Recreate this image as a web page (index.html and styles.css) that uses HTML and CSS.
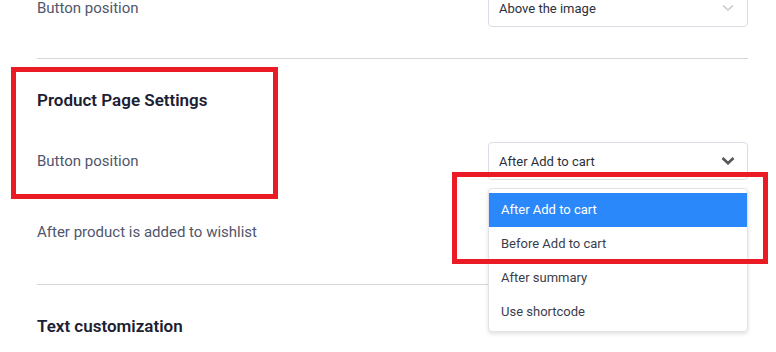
FILE: index.html
```html
<!DOCTYPE html>
<html>
<head>
<meta charset="utf-8">
<link rel="stylesheet" href="styles.css">
</head>
<body>
<div class="page">
  <div class="row row-first">
    <span class="label">Button position</span>
    <div class="select">
      <span class="select-text">Above the image</span>
      <svg class="chev chev-light" width="14" height="10" viewBox="0 0 14 10"><path d="M2 2.5 L7 7 L12 2.5" fill="none" stroke="#c9c9cf" stroke-width="1.6"/></svg>
    </div>
  </div>
  <div class="sep sep-1"></div>
  <h2 class="heading heading-1">Product Page Settings</h2>
  <div class="row row-2">
    <span class="label">Button position</span>
    <div class="select">
      <span class="select-text">After Add to cart</span>
      <svg class="chev" width="14" height="10" viewBox="0 0 14 10"><path d="M1.5 2 L7 7.2 L12.5 2" fill="none" stroke="#555" stroke-width="2.6"/></svg>
    </div>
  </div>
  <div class="row row-3">
    <span class="label">After product is added to wishlist</span>
  </div>
  <div class="sep sep-2"></div>
  <h2 class="heading heading-2">Text customization</h2>
</div>

<div class="menu">
  <div class="item active">After Add to cart</div>
  <div class="item">Before Add to cart</div>
  <div class="item">After summary</div>
  <div class="item">Use shortcode</div>
</div>

<div class="mark mark-1"></div>
<div class="mark mark-2"></div>
</body>
</html>
```
FILE: styles.css
```css
html, body {
  margin: 0;
  padding: 0;
  background: #fff;
  overflow: hidden;
}
body {
  width: 776px;
  height: 352px;
  position: relative;
  font-family: Roboto, "Liberation Sans", sans-serif;
}
.page {
  padding: 0 28px 0 37px;
}
.row {
  display: flex;
  align-items: center;
  justify-content: space-between;
  height: 38px;
}
.row-first {
  margin-top: -11px;
}
.label {
  font-size: 15px;
  color: #50566b;
}
.select {
  width: 260px;
  height: 38px;
  box-sizing: border-box;
  border: 1px solid #dcdce6;
  border-radius: 4px;
  display: flex;
  align-items: center;
  justify-content: space-between;
  padding: 0 12px 0 10px;
}
.select-text {
  font-size: 13px;
  color: #2c2f3a;
}
.chev {
  display: block;
}
.sep {
  border-top: 1px solid #d6d6d9;
}
.sep-1 {
  margin-top: 31px;
}
.heading {
  margin: 0;
  font-size: 17px;
  font-weight: 600;
  color: #1b2033;
  line-height: 22px;
}
.heading-1 {
  margin-top: 30px;
}
.row-2 {
  margin-top: 31px;
}
.row-3 {
  margin-top: 33px;
}
.sep-2 {
  margin-top: 33px;
}
.heading-2 {
  margin-top: 30px;
}
.menu {
  position: absolute;
  left: 488px;
  top: 188px;
  width: 260px;
  box-sizing: border-box;
  border: 1px solid #e2e2e8;
  border-radius: 4px;
  background: #fff;
  box-shadow: 0 2px 4px rgba(0,0,0,0.12);
  padding: 4px 0 2px;
}
.item {
  height: 34px;
  line-height: 34px;
  padding-left: 12px;
  font-size: 13px;
  color: #3a3e4c;
}
.item.active {
  background: #2b88fb;
  color: #fff;
}
.mark {
  position: absolute;
  border: 5px solid #ea1b25;
  box-sizing: border-box;
}
.mark-1 {
  left: 11px;
  top: 67px;
  width: 267px;
  height: 132px;
}
.mark-2 {
  left: 452px;
  top: 172px;
  width: 316px;
  height: 92px;
}
```
